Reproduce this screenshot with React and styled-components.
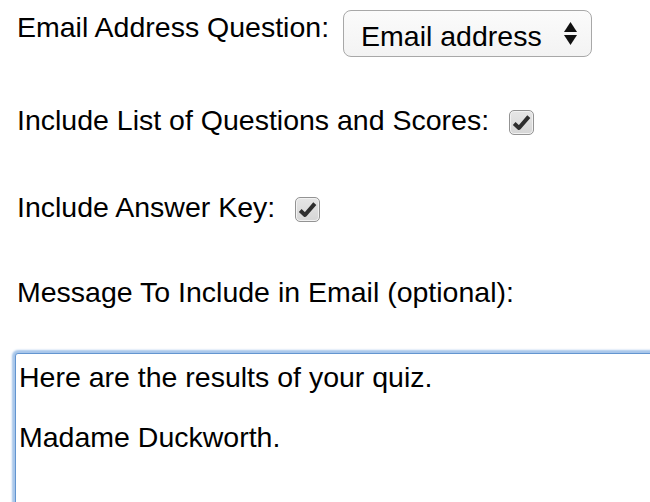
import styled, { createGlobalStyle } from "styled-components";

const GlobalStyle = createGlobalStyle`
  html, body {
    margin: 0;
    padding: 0;
    overflow: hidden;
    background: #fff;
  }
  body {
    font-family: "Liberation Sans", Arial, sans-serif;
    font-size: 28.5px;
    line-height: 30px;
    color: #000;
  }
`;

const Form = styled.form`
  display: flex;
  flex-direction: column;
  padding-left: 17px;
  width: 800px;
`;

const Row = styled.div`
  display: flex;
  align-items: flex-start;
  margin-top: ${(p) => p.$mt}px;
`;

const Label = styled.label`
  display: block;
  height: 30px;
  margin-top: ${(p) => p.$mt || 0}px;
  white-space: nowrap;
`;

const SelectBox = styled.div`
  display: flex;
  align-items: center;
  justify-content: space-between;
  box-sizing: border-box;
  width: 249px;
  height: 47px;
  margin-top: -1px;
  margin-left: 14px;
  padding: 5px 14px 0 17px;
  border: 1.5px solid #a8a8a8;
  border-radius: 8px;
  background: linear-gradient(#fbfbfb, #f3f3f3);
  white-space: nowrap;

  svg {
    margin-top: -4px;
    flex: none;
  }
`;

const Check = styled.span`
  display: flex;
  align-items: center;
  justify-content: center;
  box-sizing: border-box;
  width: 25px;
  height: 25px;
  margin-top: 5px;
  margin-left: 20px;
  border: 1.5px solid #939393;
  border-radius: 5px;
  background: linear-gradient(#e6e6e6, #d6d6d6);
  box-shadow: inset 0 0 0 1px #f2f2f2;
`;

const MessageArea = styled.textarea`
  display: block;
  box-sizing: border-box;
  width: 720px;
  height: 220px;
  margin-top: 46px;
  margin-left: -2px;
  padding: 8px 3px;
  border: 1px solid #6395d0;
  border-radius: 3px;
  box-shadow: 0 0 2px 3px #a7c6ea;
  outline: none;
  resize: none;
  font: inherit;
  line-height: 30px;
  color: #000;
  overflow: hidden;
`;

const Arrows = () => (
  <svg width="13" height="24" viewBox="0 0 13 24">
    <polygon points="6.5,0 13,10 0,10" fill="#111" />
    <polygon points="0,13 13,13 6.5,23" fill="#111" />
  </svg>
);

const CheckMark = () => (
  <svg width="19" height="17" viewBox="0 0 19 17">
    <path
      d="M2.2 9.5 L7 14 L16.8 2.6"
      fill="none"
      stroke="#2e2e2e"
      strokeWidth="4"
      strokeLinejoin="round"
    />
  </svg>
);

export default function App() {
  return (
    <>
      <GlobalStyle />
      <Form onSubmit={(e) => e.preventDefault()}>
        <Row $mt={11}>
          <Label $mt={1}>Email Address Question:</Label>
          <SelectBox>
            <span>Email address</span>
            <Arrows />
          </SelectBox>
        </Row>
        <Row $mt={48}>
          <Label>Include List of Questions and Scores:</Label>
          <Check>
            <CheckMark />
          </Check>
        </Row>
        <Row $mt={57}>
          <Label>Include Answer Key:</Label>
          <Check>
            <CheckMark />
          </Check>
        </Row>
        <Row $mt={55}>
          <Label>Message To Include in Email (optional):</Label>
        </Row>
        <MessageArea
          defaultValue={"Here are the results of your quiz.\n\nMadame Duckworth."}
        />
      </Form>
    </>
  );
}
